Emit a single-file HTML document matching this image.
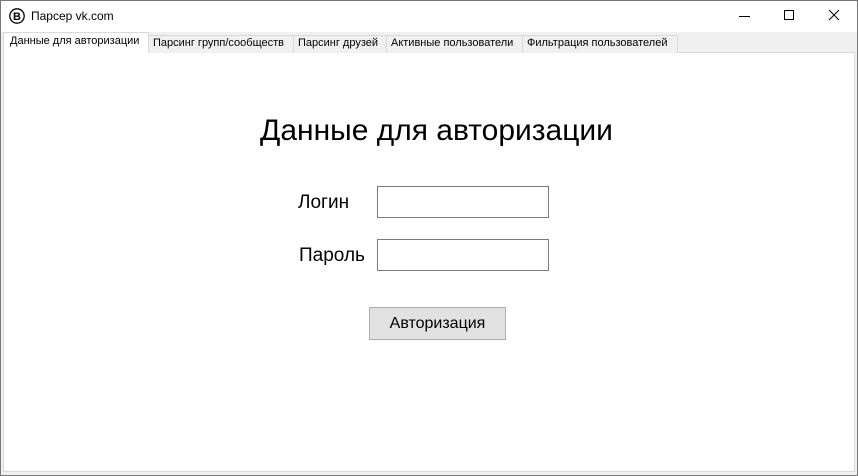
<!DOCTYPE html>
<html><head><meta charset="utf-8"><style>
*{margin:0;padding:0;box-sizing:border-box}
body{width:858px;height:476px;position:relative;background:#f0f0f0;font-family:"Liberation Sans",sans-serif;overflow:hidden}
.win{position:absolute;left:0;top:0;width:858px;height:476px;border:1px solid #777;}
.title{position:absolute;left:0;top:0;width:856px;height:31px;background:#fff}
.t{position:absolute;font-size:12px;color:#000;white-space:nowrap}
.tab{position:absolute;top:35px;height:18px;border:1px solid #d9d9d9;border-bottom:none;background:#f0f0f0;font-size:11px;line-height:15px;padding-left:4px;white-space:nowrap}
.content{position:absolute;left:3px;top:52px;width:852px;height:420px;background:#fff;border:1px solid #d9d9d9}
.inp{position:absolute;width:172px;height:32px;border:1px solid #7a7a7a;background:#fff}
</style></head><body>
<div class="win"></div>
<div class="title" style="left:1px;top:1px;width:856px;height:31px">
<svg style="position:absolute;left:8px;top:7px" width="16" height="16" viewBox="0 0 16 16"><circle cx="8" cy="8" r="7.2" fill="none" stroke="#000" stroke-width="1.3"/><text x="8" y="12.2" font-family="Liberation Sans" font-weight="bold" font-size="11" text-anchor="middle">B</text></svg>
<div class="t" style="left:30px;top:8px">Парсер vk.com</div>
<div style="position:absolute;left:738px;top:15px;width:11px;height:1px;background:#000"></div>
<div style="position:absolute;left:783px;top:9px;width:10px;height:10px;border:1px solid #000"></div>
<svg style="position:absolute;left:827px;top:8px" width="12" height="12"><path d="M1 1L11 11M11 1L1 11" stroke="#000" stroke-width="1"/></svg>
</div>
<div class="content"></div>
<div class="tab" style="left:3px;top:32px;width:146px;height:21px;background:#fff;line-height:17px;padding-left:6px;z-index:2">Данные для авторизации</div>
<div class="tab" style="left:148px;width:146px">Парсинг групп/сообществ</div>
<div class="tab" style="left:293px;width:94px">Парсинг друзей</div>
<div class="tab" style="left:386px;width:137px">Активные пользователи</div>
<div class="tab" style="left:522px;width:156px">Фильтрация пользователей</div>
<div class="t" style="left:260px;top:114px;font-size:30px">Данные для авторизации</div>
<div class="t" style="left:298px;top:192px;font-size:19px">Логин</div>
<div class="t" style="left:299px;top:245px;font-size:19px">Пароль</div>
<div class="inp" style="left:377px;top:186px"></div>
<div class="inp" style="left:377px;top:239px"></div>
<div style="position:absolute;left:369px;top:307px;width:137px;height:33px;background:#e1e1e1;border:1px solid #adadad;font-size:16px;text-align:center;line-height:31px">Авторизация</div>
</body></html>
